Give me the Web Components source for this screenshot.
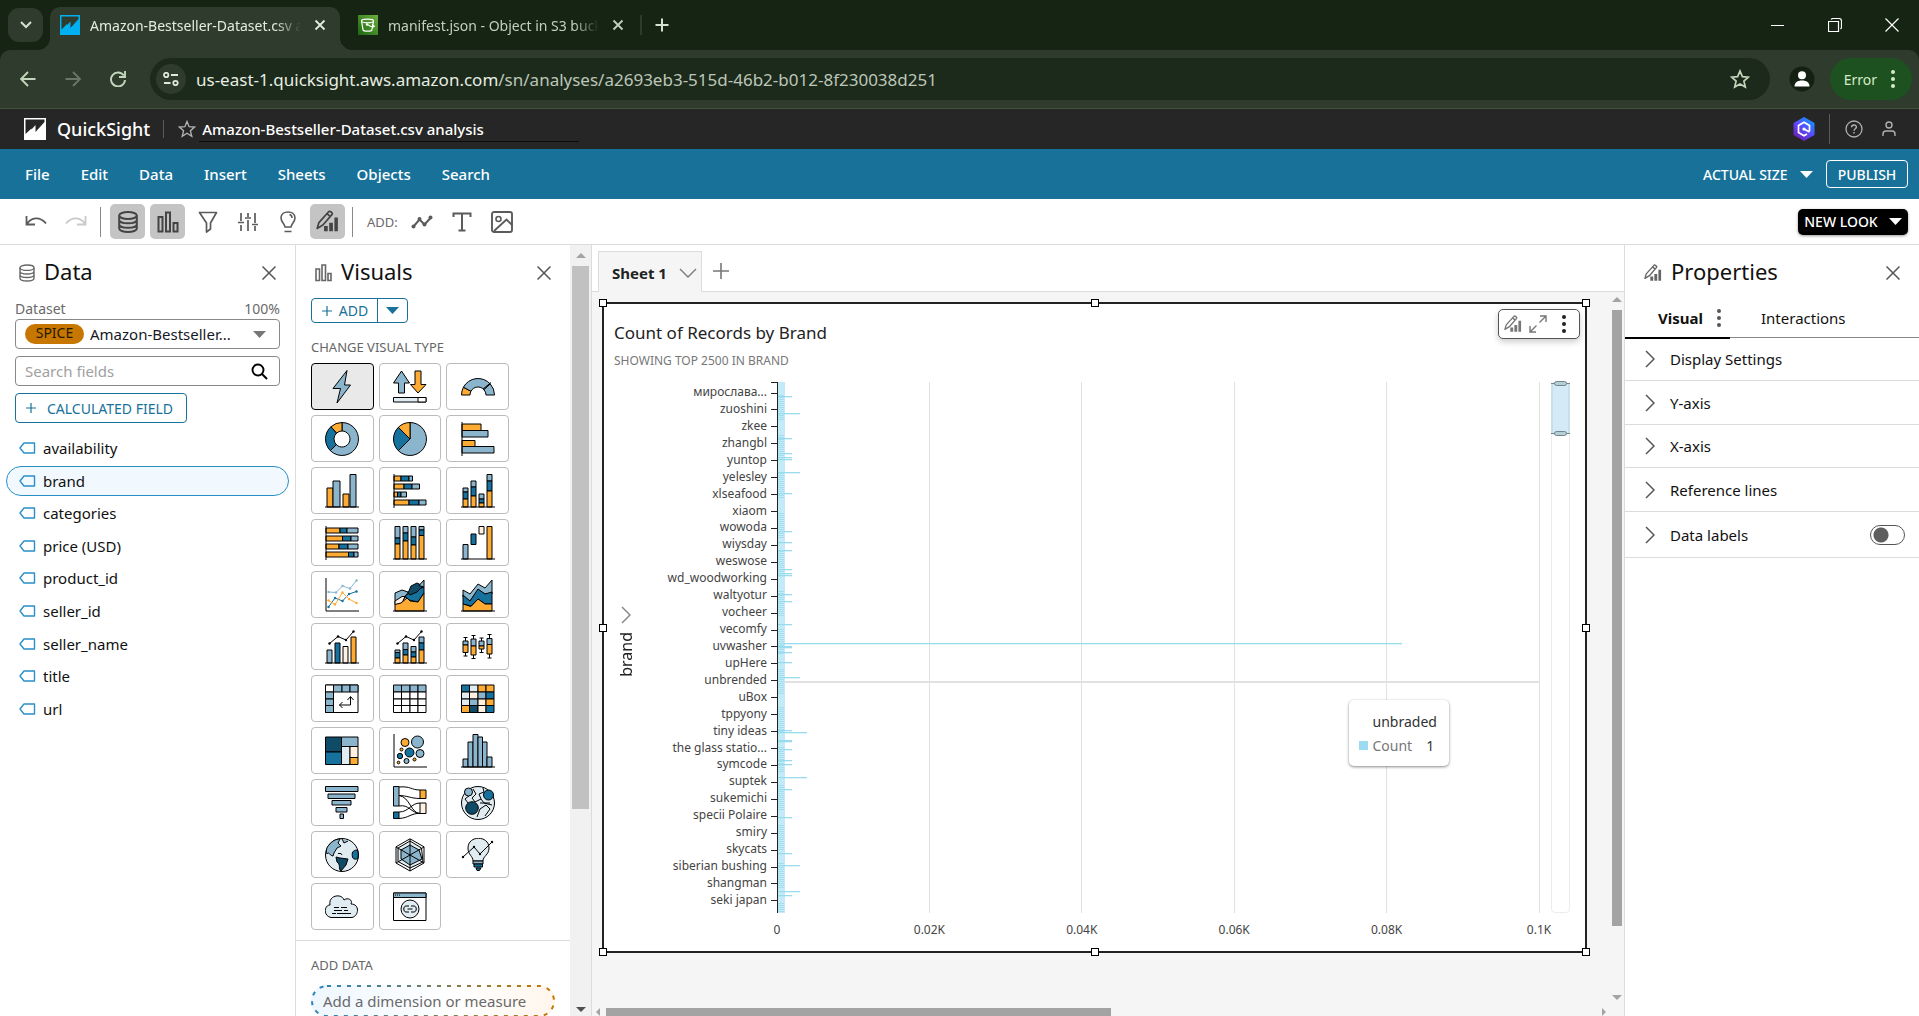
<!DOCTYPE html>
<html lang="en">
<head>
<meta charset="utf-8">
<title>Amazon-Bestseller-Dataset.csv analysis</title>
<style>
html,body{margin:0;height:100%;font-family:"Noto Sans","Open Sans",sans-serif;font-size:15px;color:#16191f;background:#fff}
body{overflow:hidden}
</style>
</head>
<body>
<analysis-app></analysis-app>
<script>
const BASE = `*{box-sizing:border-box}:host([hidden]){display:none}
button,input,select{font:inherit;color:inherit;background:none;border:0;margin:0;padding:0}
button{display:inline-flex;align-items:center;justify-content:center}
ul{list-style:none;margin:0;padding:0}h1,h2,h3,p{margin:0;font-weight:400}`;
function define(tag, css, html, setup) {
  const t = document.createElement('template');
  t.innerHTML = `<style>${BASE}${css}</style>${html}`;
  customElements.define(tag, class extends HTMLElement {
    constructor() { super(); this.attachShadow({mode: 'open'}); }
    connectedCallback() {
      this.shadowRoot.replaceChildren(t.content.cloneNode(true));
      if (setup) setup(this.shadowRoot, this);
    }
  });
}

/* ---------- icons ---------- */
const G = 'fill="none" stroke="currentColor"';
const pencil = `<g ${G} stroke-width="1.5" stroke-linejoin="round"><path d="M1 16l1.500-5L11 1.500c1-1 3.800 1 3 2.300L6 13z"/><path d="M9.500 3.200l3 2.500"/></g><path d="M7 14h3.200v4.500H7zM11.500 11h3.200v7.500h-3.200zM16 6.500h3v12h-3z" fill="currentColor"/>`;
const ICONS = {
  chevdown: [12,8,`<path d="M1 1l5 5 5-5" ${G} stroke-width="2"/>`],
  tabx: [12,12,`<path d="M1.500 1.500l9 9M10.500 1.500l-9 9" ${G} stroke-width="1.8"/>`],
  plus14: [14,14,`<path d="M7 0.500v13M.5 7h13" ${G} stroke-width="2"/>`],
  plus10: [12,12,`<path d="M6 1v10M1 6h10" ${G} stroke-width="1.2"/>`],
  plus16: [16,16,`<path d="M8 0v16M0 8h16" ${G} stroke-width="1.6"/>`],
  qs: [22,22,`<path d="M0 0h22v22H0z" fill="currentColor"/><path d="M1.500 1.500H20.500V4L11.500 14V7L7.500 11.500v-1L1.500 16z" fill="var(--cut,#262626)"/>`],
  qsfav: [20,20,`<path d="M0 0h20v20H0z" fill="#00b0f0"/><path d="M1.500 1.500H18.500V4L10.500 13V6.500L7 10v-1L1.500 14.500z" fill="#2f3c2d"/>`],
  s3: [20,20,`<defs><linearGradient id="g" x1="0" y1="1" x2="1" y2="0"><stop offset="0" stop-color="#1b660f"/><stop offset="1" stop-color="#6cae3e"/></linearGradient></defs><path d="M0 0h20v20H0z" fill="url(#g)"/><g fill="none" stroke="#fff" stroke-width="1.2"><ellipse cx="9.500" cy="6" rx="6" ry="1.8"/><path d="M3.500 6l1.600 9c.4 1.500 8.400 1.500 8.800 0l1.600-9M9.500 9.500c2 1.500 5 2.500 6.500 2.200.8-.6-.5-1.600-2-2.200"/><circle cx="9" cy="9.500" r=".6"/></g>`],
  back: [16,16,`<path d="M15.500 8H1.500M8 1L1 8l7 7" ${G} stroke-width="1.9"/>`],
  fwd: [16,16,`<path d="M.5 8h14M8 1l7 7-7 7" ${G} stroke-width="1.9"/>`],
  reload: [16,16,`<path d="M13.800 4.500A7 7 0 1 0 15 9" ${G} stroke-width="1.9"/><path d="M15 0v6H9" ${G} stroke-width="1.9"/>`],
  tune: [16,14,`<g ${G} stroke-width="1.8"><circle cx="3.200" cy="3" r="2.200"/><path d="M8 3h7M1 11h6.500"/><circle cx="12.500" cy="11" r="2.200"/></g>`],
  star: [20,20,`<path d="M10 2l2.400 5.600 6 .5-4.500 4 1.400 6L10 14.900l-5.300 3.200 1.400-6-4.500-4 6-.5z" ${G} stroke-width="1.7"/>`],
  star2: [18,18,`<path d="M9 1.500l2.100 5.200 5.500.4-4.200 3.600 1.400 5.600L9 13.300l-4.800 3 1.400-5.600-4.200-3.600 5.500-.4z" ${G} stroke-width="1.3"/>`],
  avatar: [26,26,`<circle cx="13" cy="13" r="12.500" fill="#132113"/><circle cx="13" cy="9.200" r="4" fill="#fff"/><path d="M5.500 20.500c0-4 3-6 7.500-6s7.500 2 7.500 6z" fill="#fff"/>`],
  dots: [4,18,`<g fill="currentColor"><circle cx="2" cy="2" r="2"/><circle cx="2" cy="9" r="2"/><circle cx="2" cy="16" r="2"/></g>`],
  wmin: [14,14,`<path d="M0 7.500h13" ${G}/>`],
  wmax: [14,14,`<path d="M.5 3.500h10v10H.5zM3 1.500C3.500.8 4 .5 5 .5h6c2 0 2.500.5 2.500 2.500v6c0 1-.3 1.500-1 2" ${G} stroke-width="1.2"/>`],
  wclose: [14,14,`<path d="M.5.5l13 13M13.500.5l-13 13" ${G} stroke-width="1.2"/>`],
  hex: [22,24,`<defs><linearGradient id="h" x1=".9" y1="0" x2=".2" y2="1"><stop offset="0" stop-color="#05a3ff"/><stop offset=".5" stop-color="#5a4cff"/><stop offset="1" stop-color="#6d1bb0"/></linearGradient></defs><path d="M11 0l10.500 6v12L11 24 .5 18V6z" fill="url(#h)"/><path d="M16.500 14.500v-6L11 5.300 5.500 8.500v7L11 18.700l3-1.700M11 12l5.500 3" fill="none" stroke="#fff" stroke-width="1.7"/><circle cx="11" cy="12" r="1.6" fill="#fff"/>`],
  help: [18,18,`<circle cx="9" cy="9" r="8" ${G} stroke-width="1.3"/><path d="M6.600 7.300c0-3 4.800-3 4.800-.2 0 1.700-2.400 1.600-2.400 3.600M9 12v1.500" ${G} stroke-width="1.5"/>`],
  user: [14,16,`<circle cx="7" cy="4" r="3" ${G} stroke-width="1.4"/><path d="M1 15v-2c0-2 1.500-3 3-3h6c1.500 0 3 1 3 3v2" ${G} stroke-width="1.4"/>`],
  caret: [13,7,`<path d="M0 0h13L6.500 7z" fill="currentColor"/>`],
  undo: [22,14,`<path d="M1.500 1v8.500H10M2 9C6 2 15 1 21 8.500" ${G} stroke-width="1.8"/>`],
  redo: [22,14,`<path d="M20.500 1v8.500H12M20 9C16 2 7 1 1 8.500" ${G} stroke-width="1.8"/>`],
  db: [20,22,`<g ${G} stroke-width="2"><ellipse cx="10" cy="4.500" rx="8.800" ry="3.500"/><path d="M1.200 4.500v13c0 2 4 3.500 8.800 3.500s8.800-1.500 8.800-3.500v-13M1.200 9c0 2 4 3.300 8.800 3.300S18.800 11 18.800 9M1.200 13.500c0 2 4 3.300 8.800 3.300s8.800-1.300 8.800-3.300"/></g>`],
  bars: [22,22,`<path d="M1.500 6h4v14.500h-4zM9 1.500h4v19H9zM16.500 12h4v8.500h-4z" ${G} stroke-width="2"/>`],
  filter: [20,22,`<path d="M1.500 1.500h17L12.500 12v6l-4 3V12z" ${G} stroke-width="1.7" stroke-linejoin="round"/>`],
  sliders: [20,18,`<path d="M3 0v8M0 9.500h6M3 12v6M10 0v4M7 5h6M10 7v11M17 0v10M14 11.500h6M17 13v5" ${G} stroke-width="1.7"/>`],
  bulb: [16,22,`<path d="M5 16c0-3-4-5-4-9 0-8 14-8 14 0 0 4-4 6-4 9zM4.500 20.500h7M9.500 3.500c2 .5 2.500 2 2.500 3.500" ${G} stroke-width="1.6"/>`],
  pencil: [18,18,`<g transform="scale(.9)">${pencil}</g>`],
  pencilbig: [24,24,`<g transform="scale(1.15)">${pencil}</g>`],
  linedots: [22,14,`<path d="M2.500 11.500l6-7 5 5 6.500-7" ${G} stroke-width="2"/><g fill="currentColor"><circle cx="2.500" cy="11.500" r="2"/><circle cx="8.500" cy="4" r="2"/><circle cx="13.500" cy="9.500" r="2"/><circle cx="19.500" cy="2.500" r="2"/></g>`],
  tee: [20,20,`<path d="M1.500 5V1.500h17V5M10 1.500v17M6.500 18.500h7" ${G} stroke-width="2"/>`],
  image: [22,22,`<rect x="1" y="1" width="20" height="20" rx="2" ${G} stroke-width="1.9"/><circle cx="7.500" cy="8" r="2.500" ${G} stroke-width="1.6"/><path d="M3 20L15.500 8.500 21 14" ${G} stroke-width="1.9"/>`],
  dbs: [16,18,`<g ${G} stroke-width="1.4"><ellipse cx="8" cy="3.700" rx="7" ry="2.700"/><path d="M1 3.700v10.600c0 1.500 3 2.700 7 2.700s7-1.200 7-2.700V3.700M1 7.300c0 1.500 3 2.700 7 2.700s7-1.200 7-2.700M1 10.800c0 1.500 3 2.700 7 2.700s7-1.200 7-2.700"/></g>`],
  barss: [17,18,`<path d="M1 5h3.500v11.500H1zM7 1h3.500v15.500H7zM13 9.500h3v7h-3z" ${G} stroke-width="1.6"/>`],
  close: [14,14,`<path d="M.5.5l13 13M13.500.5l-13 13" ${G} stroke-width="1.5"/>`],
  search: [17,17,`<circle cx="7" cy="7" r="5.500" ${G} stroke-width="1.9"/><path d="M11 11l5 5" ${G} stroke-width="2"/>`],
  tag: [17,12,`<path d="M5 1h10.500v10H5L1 6z" ${G} stroke-width="1.4" stroke-linejoin="round"/>`],
  chevr: [10,18,`<path d="M1 1l8 8-8 8" ${G} stroke-width="1.5"/>`],
  chevd: [18,10,`<path d="M1 1l8 8 8-8" ${G} stroke-width="1.3"/>`],
  expand: [18,18,`<path d="M10.500 7.500L17 1M11 1h6v6M7.500 10.500L1 17M1 11v6h6" ${G} stroke-width="1.4"/>`]
};
customElements.define('ui-icon', class extends HTMLElement {
  connectedCallback() {
    const [w, h, s] = ICONS[this.getAttribute('name')];
    (this.shadowRoot || this.attachShadow({mode: 'open'})).innerHTML =
      `<style>:host{display:inline-flex;flex:none}svg{display:block}</style><svg width="${w}" height="${h}" viewBox="0 0 ${w} ${h}" aria-hidden="true">${s}</svg>`;
  }
});

/* ---------- visual type glyphs (34 x 34) ---------- */
const L = '#8bb5cd', D = '#16719c', N = '#0f4a66', O = '#fdab32', P = '#e0ecf1', C = '#fff0e0', W = '#fff';
const r = (x, y, X, Y, f) => `<path d="M${x} ${y}H${X}V${Y}H${x}z" fill="${f}"/>`;
const pg = (p, f) => `<polygon points="${p}" fill="${f}"/>`;
const pl = (p, s = '#000') => `<polyline points="${p}" fill="none" stroke="${s}"/>`;
const ci = (x, y, q, f) => `<circle cx="${x}" cy="${y}" r="${q}" fill="${f}"/>`;
const seg = (cx, cy, R, q, a, b, f) => {
  const p = (rad, t) => `${(cx + rad * Math.sin(t * Math.PI / 180)).toFixed(2)} ${(cy - rad * Math.cos(t * Math.PI / 180)).toFixed(2)}`;
  const big = b - a > 180 ? 1 : 0;
  return `<path d="M${p(R, a)}A${R} ${R} 0 ${big} 1 ${p(R, b)}L${p(q, b)}${q ? `A${q} ${q} 0 ${big} 0 ${p(q, a)}` : ''}z" fill="${f}"/>`;
};
const hst = (y, xs, cs) => xs.slice(1).map((x, i) => r(xs[i], y, x, y + 5, cs[i])).join('');
const vst = (x, ys, cs) => ys.slice(1).map((y, i) => r(x, ys[i], x + 5, y, cs[i])).join('');
const base = pl('0,33 34,33'), left = pl('1,0 1,34');
const dots = (p, s) => pl(p, s) + p.split(' ').map(q => { const [x, y] = q.split(','); return `<circle cx="${x}" cy="${y}" r="1.2" fill="${s}" stroke="none"/>`; }).join('');
const box = (x, a, s, b, t, u) => pl(`${x + 2.5},${t} ${x + 2.5},${u}`) + pl(`${x + .5},${t} ${x + 4.5},${t}`) + pl(`${x + .5},${u} ${x + 4.5},${u}`) + vst(x, [a, s, b], [L, O]);
const cells = (rows, xs, ys) => rows.map((row, j) => row.map((c, i) => r(xs[i], ys[j], xs[i + 1], ys[j + 1], c)).join('')).join('');
const GX = [.5, 8.5, 17, 25, 33], GY = [3, 10, 17, 23.5, 30.5];
const VISUALS = [
  ['AutoGraph', pg('22,.5 8,18.5 15.5,18.5 12,33 25.5,15 19.5,15', L)],
  ['KPI', pg('.5,13 8.5,1 16.5,13 11.5,13 11.5,23 5.5,23 5.5,13', L) + pg('22,1 28,1 28,14.5 33,14.5 25,23 17.5,14.5 22,14.5', O) + r(.5, 27.5, 33, 32, P) + r(25, 27.5, 33, 32, W)],
  ['Gauge', seg(17, 25, 16.5, 8, -90, -62, O) + seg(17, 25, 16.5, 8, -62, 48, L) + seg(17, 25, 16.5, 8, 48, 90, L) + pl('22,19 30,12.5')],
  ['Donut', seg(17, 17, 16.5, 8, 0, 225, L) + seg(17, 17, 16.5, 8, 225, 318, D) + seg(17, 17, 16.5, 8, 318, 360, O)],
  ['Pie', seg(17, 17, 16.5, 0, 0, 225, L) + seg(17, 17, 16.5, 0, 225, 315, D) + seg(17, 17, 16.5, 0, 315, 360, O)],
  ['Horizontal bar', r(1, 2, 20, 8.5, O) + r(1, 8.5, 27, 15, L) + r(1, 18.5, 14, 24.5, O) + r(1, 24.5, 33, 31, L) + left],
  ['Vertical bar', r(2, 14, 8, 33, O) + r(8, 7, 15, 33, L) + r(18, 20, 24, 33, O) + r(25, .5, 31, 33, L) + base],
  ['Stacked horizontal', hst(2, [1, 8, 16, 19.5], [O, D, L]) + hst(10, [1, 11, 19, 26.5], [O, D, L]) + hst(18, [1, 4.5, 8, 13.5], [O, D, L]) + hst(26, [1, 16, 26, 33], [O, D, L]) + left],
  ['Stacked vertical', vst(2, [14, 18, 25, 33], [L, D, O]) + vst(10, [7, 13, 22, 33], [L, D, O]) + vst(18, [20, 25, 29, 33], [L, D, O]) + vst(26, [.5, 7, 17, 33], [L, D, O]) + base],
  ['100% horizontal', hst(2, [1, 15, 22, 33], [O, D, L]) + hst(10, [1, 17.5, 26, 33], [O, D, L]) + hst(18, [1, 14, 23, 33], [O, D, L]) + hst(26, [1, 23.5, 29, 33], [O, D, L]) + left],
  ['100% vertical', vst(2, [.5, 12, 18, 33], [L, D, O]) + vst(10, [.5, 7, 15, 33], [L, D, O]) + vst(18, [.5, 11, 19, 33], [L, D, O]) + vst(26, [.5, 4, 9.5, 33], [L, D, O]) + base],
  ['Waterfall', r(2, 18.5, 7, 33, L) + r(10, 8, 15, 18.5, D) + r(18, .5, 23, 8, C) + r(26, .5, 31, 33, O) + base],
  ['Line', pl('1,0 1,33 34,33') + dots('3.5,14 11,14.5 17.5,8 25,10.5 31.5,2.5', L) + dots('3.5,29 10,20 17.5,23 24,16 31.5,13.5', D) + dots('3.5,22.5 10,26.5 17.5,14.5 24,21 31.5,25', O)],
  ['Area', pg('2,15 9,12 15,14 12,20 8,25 2,26', L) + pg('2,23 9,18.5 12,18.5 9,25 2,27', C) + pg('12,18 18,14 31,9 31,15 25,24 16,22', D) + pg('15,15 18,8 24,5 30,8 24,14 17,17', N) + pg('31,2 31,9 26,7.5', L) + pg('2,33 2,26.5 8,25 14,20 17,23 25,24 31,15 31,33', O) + base],
  ['Stacked area', pg('2,12 9,16 17,6 24,10 31,2 31,16 24,16 17,12 9,23 2,19', L) + pg('2,17 9,23 17,11 24,16 31,14 31,26 24,26 17,21 10,28 2,26', D) + pg('2,26 10,28.5 17,21 24,26 31,26 31,33 2,33', O) + base],
  ['Bar and line', r(2, 20, 7, 33, L) + r(10, 13, 15, 33, D) + r(18, 16.5, 23, 33, C) + r(26, 7, 31, 33, O) + base + dots('4.5,13.5 13,6.5 21,10 28.5,1.5', '#000')],
  ['Stacked bar and line', vst(2, [20, 22.5, 28, 33], [L, D, O]) + vst(10, [13, 19.5, 25, 33], [L, D, O]) + vst(18, [16.5, 22, 27, 33], [L, D, O]) + vst(26, [7, 13, 20, 33], [L, D, O]) + base + dots('4.5,13.5 13,6.5 21,10 28.5,1.5', '#000')],
  ['Box plot', box(2, 11, 15, 22.5, 7.5, 26) + box(10, 9, 16, 25, 5.5, 28.5) + box(18, 11, 16, 19, 8, 22.5) + box(26, 8.5, 14.5, 24, 4.5, 28)],
  ['Pivot table', r(.5, 3, 33, 30.5, W) + cells([[W, L, L, L]], GX, GY) + cells([[L], [L], [L]], GX, [10, 17, 23.5, 30.5]) + pl('25.5,15 25.5,23 14.5,23') + pl('22.5,18 25.5,14.5 28.5,18') + pl('17.5,20 14.5,23 17.5,26')],
  ['Table', cells([[L, L, L, L], [W, W, W, W], [W, W, W, W], [W, W, W, W]], GX, GY)],
  ['Heat map', cells([[D, P, O, O], [P, C, L, D], [P, L, C, O], [O, N, C, D]], GX, GY)],
  ['Tree map', r(.5, 3, 16.5, 18, N) + r(.5, 18, 16.5, 30.5, D) + r(16.5, 3, 33, 12.5, L) + r(16.5, 12.5, 25, 30.5, P) + r(25, 12.5, 33, 23.5, C) + r(25, 23.5, 33, 30.5, O)],
  ['Scatter plot', pl('1,0 1,33 34,33') + ci(12, 8.5, 4, O) + ci(24.5, 8, 6, L) + ci(16.5, 18.5, 4.5, D) + ci(27, 19.5, 4, L) + ci(8.5, 15.5, 1.5, O) + ci(7, 22, 2.7, D) + ci(13.5, 27, 2.5, L) + ci(21.5, 25.5, 1.5, O) + ci(5.5, 28.5, 1.3, O)],
  ['Histogram', r(2, 25, 7, 33, L) + r(7, 8, 12, 33, L) + r(12, .5, 17, 33, L) + r(17, 3, 21.5, 33, L) + r(21.5, 8, 26, 33, L) + r(26, 23, 31, 33, L) + base],
  ['Funnel', r(.5, .5, 33, 5.5, L) + r(3, 8, 30, 12.5, L) + r(7, 14.5, 26, 19, L) + r(11, 21.5, 22, 26, L) + r(15, 28, 18.5, 32.5, L)],
  ['Sankey', `<g fill="none"><path d="M6 1C18 0 18 4 27 4M6 9.500C14 9.500 18 12.500 27 12.500M6 9.500C17 11 18 27.500 27 27.500M6 20C16 18 18 27 27 27.500M6 26C16 26 18 17 27 17M6 32.500C16 32 18 27 27 27.500"/></g>` + r(.5, .5, 6, 20, L) + r(.5, 26, 6, 32.5, D) + r(27, 4, 33, 12.5, O) + r(27, 17, 33, 27.5, C)],
  ['Points on map', ci(17, 17, 16.5, P) + `<path d="M12 3l3 5-4 4 3 4 6-3 3 4 8 2M9 9l-5 4 3 4M22 2l1 4-5 2 2 5M16 31l3-8 6-4 4 4-5 7M19 17h10" fill="none"/>` + ci(7.5, 6, 4, L) + ci(27.5, 9, 5, D) + ci(11, 22, 6.3, N)],
  ['Filled map', ci(17, 17, 16.5, P) + `<path d="M4 7C7 3 11 1 15 1l-2 4 3 3-4 2-3 5-1 3c-3 0-4-5-6-2C.5 12 2 9 4 7z" fill="${L}"/><path d="M17 1l2 4 4-2" fill="${L}"/><path d="M11 19l4 1 8 1-2 6-5 6c-3-2 0-7-4-9z" fill="${N}"/><path d="M32.500 12c-5 0-6 3-5 7 1 3 3 2 5 2 1-3 1-6 0-9z" fill="${D}"/><path d="M13 15.500h3l1 1.500" fill="none"/>`],
  ['Radar', pg('17,.8 31,8.8 31,25 17,33 3,25 3,8.8', W) + pg('17,3 28.5,10 30,24 17,30 5,23.5 5,10', P) + pg('17,7 26,12 29,21 17,27 8,21 8,12', L) + pl('17,1 17,33') + pl('3,9 31,25') + pl('31,9 3,25')],
  ['Insights', `<path d="M12 23c0-5-5-6-5-13C7-3 28-3 28 10c0 7-6 8-6 13z" fill="${P}"/>` + r(12, 23, 22, 26, L) + r(13, 26, 21.5, 29, D) + pg('15,30 20,30 18.5,32.5 16,32.5', D) + dots('2,19 13,9 19,16 31,4', '#000')],
  ['Narrative', `<path d="M6 27.500C-2 26-1 15 5 15 3 5 17 3 19 10c4-3 9 0 7 4 9 0 8 12 1 13.500z" fill="${P}"/>` + pl('9,17.5 14,17.5') + pl('16,17.5 22,17.5') + pl('9,20.5 17,20.5') + pl('19,20.5 23,20.5') + pl('7,23.5 11,23.5') + pl('12,23.5 26,23.5')],
  ['Custom content', r(.5, 3, 33, 30.5, W) + r(.5, 3, 33, 7.5, L) + ci(17, 19, 9, P) + `<path d="M16 16h-3c-3 0-3 6 0 6h3M18 16h3c3 0 3 6 0 6h-3M14.500 19h5" fill="none"/><path d="M2 5h6" stroke-dasharray="1 1"/>`]
];

/* ---------- window chrome ---------- */
define('browser-tab', `:host{display:flex;flex:none;align-items:center;position:relative;height:43px;padding:0 16px 7px 18px;width:300px;color:#c3d0bf;font-size:14px}
:host([active]){width:290px;padding:0 14px 7px 10px;background:#2f3c2d;border-radius:10px 10px 0 0;color:#e3ebdf}
:host([active])::before,:host([active])::after{content:"";position:absolute;bottom:0;width:12px;height:12px}
:host([active])::before{left:-12px;background:radial-gradient(circle at 0 0,transparent 12px,#2f3c2d 12px)}
:host([active])::after{right:-12px;background:radial-gradient(circle at 100% 0,transparent 12px,#2f3c2d 12px)}
.t{flex:1;margin:0 9px 0 10px;white-space:nowrap;overflow:hidden;-webkit-mask:linear-gradient(to right,#000 88%,transparent);mask:linear-gradient(to right,#000 88%,transparent)}
button{margin-left:4px}`,
`<slot name="icon"></slot><span class="t"><slot></slot></span><button aria-label="Close tab"><ui-icon name="tabx"></ui-icon></button>`);

define('browser-window-bar', `:host{display:flex;background:#162413;height:50px;padding:7px 20px 0 8px;color:#d6e0d2}
.menu{width:35px;height:34px;border-radius:11px;background:#2f3c2d;margin:1px 7px 0 0}
.rest{display:flex;align-items:center;height:36px;flex:1}
i{width:2px;height:20px;background:#2f3c2d;margin-right:13px}
.win{display:flex;gap:43px;margin-left:auto;color:#fff}`,
`<button class="menu" aria-label="Search tabs"><ui-icon name="chevdown"></ui-icon></button>
<browser-tab active><ui-icon slot="icon" name="qsfav"></ui-icon>Amazon-Bestseller-Dataset.csv analysis</browser-tab>
<browser-tab><ui-icon slot="icon" name="s3"></ui-icon>manifest.json - Object in S3 bucket</browser-tab>
<div class="rest"><i></i><button aria-label="New tab"><ui-icon name="plus14"></ui-icon></button>
<div class="win"><button aria-label="Minimize"><ui-icon name="wmin"></ui-icon></button><button aria-label="Restore"><ui-icon name="wmax"></ui-icon></button><button aria-label="Close"><ui-icon name="wclose"></ui-icon></button></div></div>`);

define('browser-address-bar', `:host{display:block;background:#162413}
.bar{display:flex;align-items:center;height:59px;background:#2f3c2d;border-radius:10px 10px 0 0;border-bottom:1px solid #465143;padding:0 7px 0 20px;color:#c2d6bb}
.nav{display:flex;gap:29px;margin-right:24px}
.nav button:nth-child(2){color:#6a7767}
.url{flex:1;display:flex;align-items:center;height:42px;border-radius:21px;background:#1c2a1b;padding:0 20px 0 6px}
.tune{width:30px;height:30px;border-radius:50%;background:#2f3c2d;margin-right:10px;color:#dfe8db}
.a{flex:1;font-size:17px;white-space:nowrap;color:#bcc6b8}.a b{font-weight:400;color:#e6ede2}
.av{margin:0 15px 0 19px}
.err{height:42px;border-radius:21px;background:#1d5120;color:#d5ecc9;font-size:14px;padding:0 17px 0 14px;gap:14px}`,
`<div class="bar"><div class="nav"><button aria-label="Back"><ui-icon name="back"></ui-icon></button><button aria-label="Forward"><ui-icon name="fwd"></ui-icon></button><button aria-label="Reload"><ui-icon name="reload"></ui-icon></button></div>
<div class="url"><button class="tune" aria-label="Site information"><ui-icon name="tune"></ui-icon></button><span class="a"><b>us-east-1.quicksight.aws.amazon.com</b>/sn/analyses/a2693eb3-515d-46b2-b012-8f230038d251</span><button aria-label="Bookmark"><ui-icon name="star"></ui-icon></button></div>
<button class="av" aria-label="Profile"><ui-icon name="avatar"></ui-icon></button><button class="err">Error<ui-icon name="dots"></ui-icon></button></div>`);

/* ---------- product header ---------- */
define('product-header', `:host{display:flex;align-items:center;height:40px;background:#262626;color:#fff;padding:0 23px 0 24px}
.logo{display:flex;align-items:center;gap:11px;font-size:18px;font-weight:500;color:inherit;text-decoration:none}
i{width:1px;height:18px;background:#5a5a5a;margin:0 14px 0 13px}
.star{color:#b5b5b5;margin-right:3px}
input{width:380px;height:25px;padding:0 3px;border-bottom:1px solid #0c0c0c;font-weight:500;font-size:15px}
.r{display:flex;align-items:center;margin-left:auto;color:#b0b0b0}.r i{height:30px;margin:0 15px 0 14px}.r .u{margin-left:19px}`,
`<a class="logo" href="#"><ui-icon name="qs"></ui-icon>QuickSight</a><i></i><button class="star" aria-label="Favorite"><ui-icon name="star2"></ui-icon></button><input aria-label="Analysis name" value="Amazon-Bestseller-Dataset.csv analysis">
<div class="r"><button aria-label="Amazon Q"><ui-icon name="hex"></ui-icon></button><i></i><button aria-label="Help"><ui-icon name="help"></ui-icon></button><button class="u" aria-label="User"><ui-icon name="user"></ui-icon></button></div>`);

define('menu-bar', `:host{display:flex;align-items:center;height:50px;background:#187199;color:#fff;padding:0 11px 0 25px;font-weight:500}
nav{display:flex;gap:31px}
.r{display:flex;align-items:center;margin-left:auto;font-size:14px}
.s{display:flex;align-items:center;gap:12px;margin-right:13px}
select{appearance:none;-webkit-appearance:none}option{color:#000}
.p{width:82px;height:28px;border:1px solid #fff;border-radius:4px}`,
`<nav><button>File</button><button>Edit</button><button>Data</button><button>Insert</button><button>Sheets</button><button>Objects</button><button>Search</button></nav>
<div class="r"><span class="s"><select aria-label="Zoom"><option>ACTUAL SIZE</option></select><ui-icon name="caret"></ui-icon></span><button class="p">PUBLISH</button></div>`);

define('tool-bar', `:host{display:flex;align-items:center;height:46px;border-bottom:1px solid #dcdcdc;background:#fff;padding:0 11px 0 18px;color:#5b5b5b}
button{width:35px;height:35px;border-radius:5px;margin-right:5px}
.on{background:#c4c4c4;color:#444}
.off{color:#c9c9c9}
i{width:1px;height:30px;background:#888;margin:0 9px 0 2px}
span{font-size:13px;margin:0 7px 0 5px;color:#6a6a6a}
.new{margin:0 0 0 auto;width:110px;height:26px;background:#000;color:#fff;font-size:14px;font-weight:500;gap:11px;padding-bottom:1px;white-space:nowrap;box-shadow:0 1px 3px #0006}`,
`<button aria-label="Undo"><ui-icon name="undo"></ui-icon></button><button class="off" aria-label="Redo"><ui-icon name="redo"></ui-icon></button><i></i>
<button class="on" aria-label="Data"><ui-icon name="db"></ui-icon></button><button class="on" aria-label="Visuals"><ui-icon name="bars"></ui-icon></button><button aria-label="Filter"><ui-icon name="filter"></ui-icon></button><button aria-label="Parameters"><ui-icon name="sliders"></ui-icon></button><button aria-label="Insights"><ui-icon name="bulb"></ui-icon></button><button class="on" aria-label="Properties"><ui-icon name="pencilbig"></ui-icon></button><i></i>
<span>ADD:</span><button aria-label="Add visual"><ui-icon name="linedots"></ui-icon></button><button aria-label="Add text"><ui-icon name="tee"></ui-icon></button><button aria-label="Add image"><ui-icon name="image"></ui-icon></button>
<button class="new">NEW LOOK<ui-icon name="caret"></ui-icon></button>`);

/* ---------- side panels ---------- */
define('panel-title', `:host{display:flex;align-items:center;height:55px;padding:0 19px}
h2{font-size:22px;line-height:30px;color:#111;margin-left:9px;padding-bottom:4px}
.i{color:#666;display:flex}button{margin-left:auto;color:#555}`,
`<span class="i"><slot name="icon"></slot></span><h2><slot></slot></h2><button aria-label="Close panel"><ui-icon name="close"></ui-icon></button>`);

define('data-field', `:host{display:block;padding:1px 0}
button{width:100%;height:100%;justify-content:flex-start;border:1px solid transparent;border-radius:16px;gap:7px;padding:0 12px;color:#111}
ui-icon{color:#2a8fc9}
:host([selected]) button{border-color:#2a8fc9;background:#f1f9fe}`,
`<button><ui-icon name="tag"></ui-icon><slot></slot></button>`);

define('data-panel', `:host{display:flex;flex-direction:column;border-right:1px solid #dcdcdc;background:#fff}
.b{padding:0 15px;display:flex;flex-direction:column}
.row{display:flex;justify-content:space-between;font-size:14px;line-height:18px;color:#6a6a6a;margin-bottom:1px}
.f{display:flex;align-items:center;height:30px;border:1px solid #888;border-radius:4px;padding:0 13px 0 9px;color:#16191f;margin-bottom:7px}
.pill{background:#c77700;color:#261a00;border-radius:10px;height:20px;line-height:17px;width:59px;text-align:center;font-size:14px;margin-right:6px}
select,input{flex:1;min-width:0;appearance:none;-webkit-appearance:none;outline:0}
input::placeholder{color:#a0a0a0;opacity:1}
.s{padding:0 11px 0 9px;color:#000}.f>ui-icon.c{color:#777}
.calc{align-self:flex-start;height:30px;border:1px solid #187199;border-radius:4px;color:#187199;font-size:14px;padding:0 13px 0 9px;gap:10px}
ul{display:grid;grid-auto-rows:1fr;height:293px;margin:9px 6px 0 6px}
li,data-field{display:block;height:100%}`,
`<panel-title><ui-icon slot="icon" name="dbs"></ui-icon>Data</panel-title>
<div class="b"><div class="row"><label for="ds">Dataset</label><span>100%</span></div>
<div class="f"><span class="pill">SPICE</span><select id="ds"><option>Amazon-Bestseller...</option></select><ui-icon class="c" name="caret"></ui-icon></div>
<div class="f s"><input aria-label="Search fields" placeholder="Search fields"><ui-icon name="search"></ui-icon></div>
<button class="calc"><ui-icon name="plus10"></ui-icon>CALCULATED FIELD</button></div>
<ul></ul>`, root => {
  root.querySelector('ul').innerHTML = ['availability', 'brand', 'categories', 'price (USD)', 'product_id', 'seller_id', 'seller_name', 'title', 'url']
    .map(n => `<li><data-field${n === 'brand' ? ' selected' : ''}>${n}</data-field></li>`).join('');
});

define('scroll-rail', `:host{display:flex;flex-direction:column;align-items:center;color:#a3a3a3}
.a{width:0;height:0;border:5px solid transparent;flex:none}
.up{border-bottom-color:currentColor;border-top:0}.dn{border-top-color:var(--dn,currentColor);border-bottom:0}
.th{width:var(--w,17px);flex:var(--f,3) 0 0;background:var(--c,#c1c1c1);margin-top:8px}.sp{flex:1 0 0}`,
`<div class="a up"></div><div class="th"></div><div class="sp"></div><div class="a dn"></div>`);

define('visuals-panel', `:host{display:flex;background:#fff;border-right:1px solid #dcdcdc;min-height:0;overflow:hidden}
.m{flex:1;min-width:0}
.b{padding:0 15px}
.add{display:flex;width:97px;height:25px;border:1px solid #187199;border-radius:4px;color:#187199;font-size:14px;margin-bottom:15px;margin-top:-2px}
.add button:first-child{flex:1;gap:6px;border-right:1px solid #187199}.add button:last-child{width:29px}
h3{font-size:13px;line-height:18px;color:#666}
.g{display:grid;grid-template-columns:repeat(3,1fr);gap:5px;width:198px;margin:7px 0 10px}
.g button{height:47px;border:1px solid #bcbcbc;border-radius:4px;background:#fff}
.g button:first-child{background:#e9e9e9;border-color:#000}
.g svg{stroke:#000}
hr{border:0;border-top:1px solid #dcdcdc;margin:0 0 15px}
.drop{display:flex;align-items:center;height:32px;width:244px;margin-top:11px;border-radius:15px;font-size:15px;color:#6a6a6a;position:relative;padding-left:12px;background:linear-gradient(to right,#eef7fe,#fff 60%,#fff6ec)}
.drop svg{position:absolute;inset:0;width:244px;height:32px}
scroll-rail{width:21px;background:#f1f1f1;padding:8px 0 4px;--f:2.74;--dn:#505050}`,
`<div class="m"><panel-title><ui-icon slot="icon" name="barss"></ui-icon>Visuals</panel-title>
<div class="b"><div class="add"><button><ui-icon name="plus10"></ui-icon>ADD</button><button aria-label="More add options"><ui-icon name="caret"></ui-icon></button></div>
<h3>CHANGE VISUAL TYPE</h3><div class="g"></div></div><hr>
<div class="b"><h3>ADD DATA</h3><div class="drop"><svg><defs><linearGradient id="e"><stop offset="0" stop-color="#2484bd"/><stop offset="1" stop-color="#c77700"/></linearGradient></defs><rect x="1" y="1" width="242" height="30" rx="15" fill="none" stroke="url(#e)" stroke-width="2" stroke-dasharray="4 6"/></svg>Add a dimension or measure</div></div></div>
<scroll-rail></scroll-rail>`, root => {
  root.querySelector('.g').innerHTML = VISUALS.map(([n, s]) => `<button aria-label="${n}"><svg width="34" height="34" viewBox="0 0 34 34">${s}</svg></button>`).join('');
});

define('property-section', `:host{display:flex;align-items:center;height:44px;border-bottom:1px solid #dcdcdc;padding:0 14px 0 20px;color:#111}
button{gap:15px;color:inherit}button ui-icon{color:#555}.e{margin-left:auto;display:flex}`,
`<button><ui-icon name="chevr"></ui-icon><slot></slot></button><span class="e"><slot name="end"></slot></span>`);

define('toggle-switch', `input{appearance:none;-webkit-appearance:none;display:block;width:35px;height:20px;border:1px solid #555;border-radius:10px;background:radial-gradient(circle at 10px 9px,#5e5e5e 7px,transparent 8px)}:host{display:block}`,
`<input type="checkbox" role="switch" aria-label="Data labels">`);

define('properties-panel', `:host{display:block;border-left:1px solid #dcdcdc;background:#fff}
.t{display:flex;height:38px;border-bottom:1px solid #888;color:#111}
.t button{padding-bottom:1px}
.t .on{width:105px;font-weight:700;gap:14px;box-shadow:0 2px 0 #000;padding-left:24px}
.t .on+button{margin-left:31px}.t ui-icon{color:#555}
property-section{height:44px}property-section:nth-of-type(odd){height:43px}property-section:last-child{height:46px}`,
`<panel-title><ui-icon slot="icon" name="pencil"></ui-icon>Properties</panel-title>
<div class="t"><button class="on">Visual<ui-icon name="dots"></ui-icon></button><button>Interactions</button></div>
<property-section>Display Settings</property-section><property-section>Y-axis</property-section><property-section>X-axis</property-section><property-section>Reference lines</property-section><property-section>Data labels<toggle-switch slot="end"></toggle-switch></property-section>`);

/* ---------- sheet ---------- */
define('bar-chart', `:host{display:flex;height:531px}
.y{width:44px;display:flex;flex-direction:column;align-items:center;justify-content:center;padding-bottom:12px;gap:8px;font-size:16px;line-height:20px;color:#222}
.y span{writing-mode:vertical-rl;transform:rotate(180deg)}.y ui-icon{color:#888}
.p{flex:1;margin:0 12px 0 129px;position:relative}
.p>svg{display:block;width:100%;height:531px;overflow:visible;font-size:12px;fill:#444}
.z{width:19px;border:1px solid #ececec;border-radius:4px;margin-right:15px}
.z svg{display:block;margin:-4px -1px}
.tip{position:absolute;left:75%;top:318px;width:100px;height:66px;background:#fff;border-radius:5px;box-shadow:0 1px 3px #0007;font-size:14px;color:#333;padding:9px 10px 0;display:grid;grid-template-columns:9px auto 1fr;column-gap:5px;grid-auto-rows:24px;align-items:center}
.tip b{font-weight:400;grid-column:2/4}.tip i{width:9px;height:9px;background:#9ddcf0}.tip span{color:#777}.tip em{font-style:normal;padding-left:9px}`,
`<div class="y"><ui-icon name="chevr"></ui-icon><span>brand</span></div>
<div class="p"><svg role="img" aria-label="Count of Records by Brand"></svg><div class="tip"><b>unbraded</b><i></i><span>Count</span><em>1</em></div></div>
<div class="z"><svg width="19" height="62"><path d="M1 4.500h17v50H1z" fill="#d4ebf7" stroke="#b5d3e0"/><path d="M0 4.500h19M0 54.500h19" stroke="#6f8791"/><rect x="3.500" y="2.500" width="12" height="4" rx="2" fill="#b8ccd4" stroke="#6f8791"/><rect x="3.500" y="52.500" width="12" height="4" rx="2" fill="#b8ccd4" stroke="#6f8791"/></svg></div>`,
root => {
  const brands = ['мирослава...', 'zuoshini', 'zkee', 'zhangbl', 'yuntop', 'yelesley', 'xlseafood', 'xiaom', 'wowoda', 'wiysday', 'weswose', 'wd_woodworking', 'waltyotur', 'vocheer', 'vecomfy', 'uvwasher', 'upHere', 'unbrended', 'uBox', 'tppyony', 'tiny ideas', 'the glass statio...', 'symcode', 'suptek', 'sukemichi', 'specii Polaire', 'smiry', 'skycats', 'siberian bushing', 'shangman', 'seki japan'];
  const counts = [[14, 2], [31, 3], [56, 2], [71, 2], [75, 2], [77, 2], [90, 3], [111, 2], [149, 2], [160, 2], [168, 2], [187, 2], [191, 2], [193, 2], [212, 2], [219, 2], [242, 2], [261, 82], [264, 2], [265, 2], [270, 2], [280, 2], [295, 3], [348, 2], [350, 4], [358, 2], [359, 2], [367, 2], [378, 2], [382, 2], [395, 4], [407, 2], [435, 2], [471, 2], [483, 3], [509, 3], [513, 2]];
  let s = '<g shape-rendering="crispEdges">';
  for (let i = 1; i <= 5; i++) s += `<line x1="${i * 20}%" x2="${i * 20}%" y1="0" y2="531" stroke="#e1e1e1"/>`;
  s += '<rect x="0" y="299" width="100%" height="2" fill="#e1e1e1"/><rect x="1" y="0" width=".9%" height="531" fill="#c3eaf6"/>';
  for (let y = 1; y < 531; y += 2) if (Math.floor(y / 13) % 3) s += `<rect x="1" y="${y}" width=".8%" height="1" fill="#a4deef"/>`;
  for (const [y, c] of counts) s += `<rect x="0" y="${y}" width="${c}%" height="2" fill="#a4e0ef" opacity=".35"/><rect x="0" y="${y}" width="${c}%" height="1" fill="#98dcee"/>`;
  s += '<path d="M.5 0v531M-6 .5H0" stroke="#222"/>';
  brands.forEach((b, i) => { s += `<path d="M-6 ${Math.round(10.5 + i * 16.93)}.5H0" stroke="#222"/>`; });
  s += '</g>';
  brands.forEach((b, i) => { s += `<text x="-10" y="${Math.round(14 + i * 16.93)}" text-anchor="end">${b}</text>`; });
  ['0', '0.02K', '0.04K', '0.06K', '0.08K', '0.1K'].forEach((t, i) => { s += `<text x="${i * 20}%" y="552" text-anchor="middle">${t}</text>`; });
  root.querySelector('.p>svg').innerHTML = s;
});

define('visual-card', `:host{display:block;position:relative;border:2px solid #222;background:#fff;height:651px;padding-top:16px}
h2{font-size:17px;line-height:26px;color:#222;padding-left:10px}
p{font-size:12px;line-height:18px;color:#777;margin:6px 0 12px 10px}
.h{position:absolute;width:8px;height:8px;background:#fff;outline:0;border:1px solid #000}
.m{position:absolute;right:5px;top:5px;width:82px;height:30px;border:1px solid #555;border-radius:5px;background:#fff;box-shadow:0 3px 6px #0003;display:flex;align-items:center;padding:0 0 0 5px;color:#777}
.m button{margin-right:7px}.m button:last-child{color:#222;margin:0 0 0 8px}`,
`<h2>Count of Records by Brand</h2><p>SHOWING TOP 2500 IN BRAND</p><bar-chart></bar-chart>
<div class="m"><button aria-label="Format"><ui-icon name="pencil"></ui-icon></button><button aria-label="Maximize"><ui-icon name="expand"></ui-icon></button><button aria-label="Menu"><ui-icon name="dots"></ui-icon></button></div>`,
root => {
  for (const x of ['0%', '50%', '100%']) for (const y of ['0%', '50%', '100%']) {
    if (x === '50%' && y === '50%') continue;
    const h = document.createElement('span');
    h.className = 'h';
    const off = v => v === '0%' ? -5 : v === '50%' ? -4 : -3;
    h.style.left = `calc(${x} + ${off(x)}px)`;
    h.style.top = `calc(${y} + ${off(y)}px)`;
    root.append(h);
  }
});

define('sheet-area', `:host{display:flex;flex-direction:column;min-width:0;background:#f5f5f5}
.tabs{display:flex;align-items:flex-end;height:47px;background:#fff;border-bottom:1px solid #dcdcdc;padding-left:6px}
.tab{display:flex;align-items:center;gap:12px;height:41px;margin-bottom:-1px;background:#f5f5f5;border:1px solid #dcdcdc;border-bottom:0;padding:2px 4px 0 13px;font-weight:700;color:#222}
.tab ui-icon,.plus{color:#777}.plus{height:40px;margin-left:11px}
.row{flex:1;display:flex;min-height:0}
.c{flex:1;padding:10px 25px 0 10px;min-width:0}
scroll-rail{width:12px;padding:5px 2px 8px 0;--w:10px;--c:#a3a3a3;--f:8.9}
.hs{display:flex;align-items:center;height:8px;padding:0 18px 0 4px;color:#a3a3a3}
.hs i{border:4px solid transparent}.hs .l{border-right-color:currentColor;border-left:0}.hs .r{border-left-color:currentColor;border-right:0;margin-left:auto}
.hs b{width:50%;height:8px;background:#a3a3a3;margin-left:6px}`,
`<div class="tabs"><div class="tab"><button>Sheet 1</button><button aria-label="Sheet options"><ui-icon name="chevd"></ui-icon></button></div><button class="plus" aria-label="Add sheet"><ui-icon name="plus16"></ui-icon></button></div>
<div class="row"><div class="c"><visual-card></visual-card></div><scroll-rail></scroll-rail></div>
<div class="hs"><i class="l"></i><b></b><i class="r"></i></div>`);

define('analysis-app', `:host{display:flex;flex-direction:column;height:100vh;overflow:hidden}
main{flex:1;display:grid;grid-template-columns:296px 296px minmax(0,1fr) 295px;grid-template-rows:minmax(0,1fr);min-height:0}`,
`<browser-window-bar></browser-window-bar><browser-address-bar></browser-address-bar><product-header></product-header><menu-bar></menu-bar><tool-bar></tool-bar>
<main><data-panel></data-panel><visuals-panel></visuals-panel><sheet-area></sheet-area><properties-panel></properties-panel></main>`);
</script>
</body>
</html>
